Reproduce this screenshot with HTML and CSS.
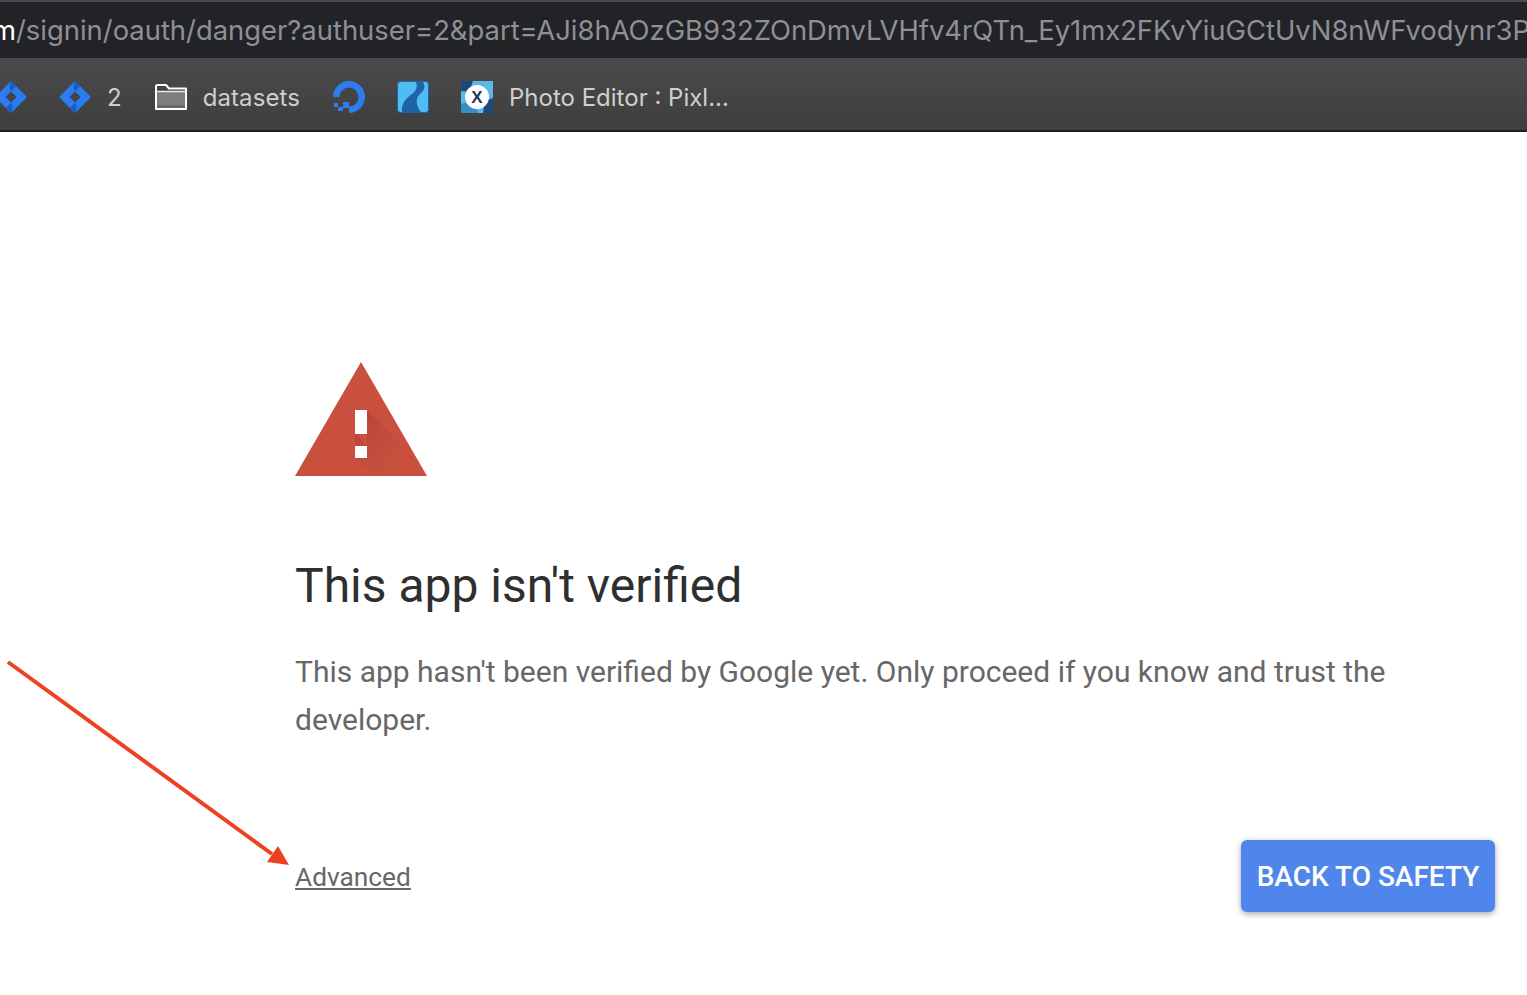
FILE: index.html
```html
<!DOCTYPE html>
<html lang="en">
<head>
  <meta charset="UTF-8">
  <title>This app isn't verified</title>
  <link rel="stylesheet" href="styles.css">
</head>
<body>

  <div class="url-bar">
    <div class="url-text"><span class="url-host">m</span>/signin/oauth/danger?authuser=2&amp;part=AJi8hAOzGB932ZOnDmvLVHfv4rQTn_Ey1mx2FKvYiuGCtUvN8nWFvodynr3P</div>
  </div>

  <div class="bookmarks">
    <div class="mark mark-cut">
      <svg class="icon" viewBox="0 0 32 32"><path fill="#2b7cf3" fill-rule="evenodd" d="M16 0 31 15Q32 16 31 17L16 32 1 17Q0 16 1 15ZM16 10.500 10.500 16 16 21.500 21.500 16Z"/><path fill="#1d5bc4" d="M16 0 21 5 16 10.500C14 7 14 3 16 0ZM16 32 11 27 16 21.500C18 25 18 29 16 32Z"/></svg>
    </div>
    <div class="mark mark-jira">
      <svg class="icon" viewBox="0 0 32 32"><path fill="#2b7cf3" fill-rule="evenodd" d="M16 0 31 15Q32 16 31 17L16 32 1 17Q0 16 1 15ZM16 10.500 10.500 16 16 21.500 21.500 16Z"/><path fill="#1d5bc4" d="M16 0 21 5 16 10.500C14 7 14 3 16 0ZM16 32 11 27 16 21.500C18 25 18 29 16 32Z"/></svg>
      <span>2</span>
    </div>
    <div class="mark mark-folder">
      <svg class="icon" viewBox="0 0 32 26"><path fill="#7d7d7d" d="M2 8H30V24H2Z"/><path fill="#666" d="M2 21.500H30V24H2Z"/><path fill="none" stroke="#fff" stroke-width="2" stroke-linejoin="round" d="M1 7V2.500Q1 1 2.500 1H11L14 4.500H31V25H1Z"/><path fill="none" stroke="#e8e8e8" stroke-width="1.500" d="M1 7.500H31"/></svg>
      <span>datasets</span>
    </div>
    <div class="mark mark-ocean">
      <svg class="icon" viewBox="0 0 32 32"><path fill="#2f7bf0" d="M16 32V25.500A9.500 9.500 0 1 0 6.500 16H0A16 16 0 1 1 16 32Z"/><path fill="#2f7bf0" d="M10 21H16V27H10ZM5 26H10V30H5ZM1 22H5V26H1Z"/></svg>
    </div>
    <div class="mark mark-river">
      <svg class="icon" viewBox="0 0 32 32"><rect x=".5" y=".5" width="31" height="31" rx="3" fill="#4fbdf4" stroke="#1f62a8"/><path fill="#1f62a8" d="M5 31C4 23 9 17 15 13C19 10 21 6 19 1L26 1C29 6 27 10 23 13C18 17 19 25 24 31Z"/></svg>
    </div>
    <div class="mark mark-pixlr">
      <svg class="icon" viewBox="0 0 32 32"><rect width="32" height="32" fill="#5cb8e8"/><path fill="#1c4a78" d="M0 0H12L8 11 0 10ZM22 32 24 20 32 17V32Z"/><path fill="#3a8cc8" d="M0 23 10 20 18 32H0Z"/><circle cx="16" cy="16" r="12" fill="#fff"/><text class="pixlr-x" x="16" y="22" text-anchor="middle">X</text></svg>
      <span>Photo Editor : Pixl...</span>
    </div>
  </div>

  <main class="page">
    <svg class="warning" viewBox="0 0 132 114">
      <defs>
        <linearGradient id="fold" x1="0" y1="0" x2="1" y2="1">
          <stop offset="0" stop-color="#a83e30" stop-opacity=".8"/>
          <stop offset="1" stop-color="#c8503f" stop-opacity="0"/>
        </linearGradient>
      </defs>
      <path fill="#c9503f" d="M66 0 132 114H0Z"/>
      <path fill="url(#fold)" d="M72 48 110 86 110 114H80L60 95 60 72 72 84Z"/>
      <path fill="#fff" d="M60 48H72V72H60ZM60 84H72V96H60Z"/>
    </svg>

    <h1>This app isn't verified</h1>
    <p>This app hasn't been verified by Google yet. Only proceed if you know and trust the developer.</p>

    <div class="actions">
      <a class="advanced" href="#">Advanced</a>
      <button class="btn-safety">BACK TO SAFETY</button>
    </div>
  </main>

  <svg class="arrow" viewBox="0 0 300 220">
    <path fill="none" stroke="#ee4023" stroke-width="4" d="M8 2 272 194"/>
    <path fill="#ee4023" d="M289 205 267 202 278 186Z"/>
  </svg>

</body>
</html>
```

FILE: styles.css
```css
body {
  margin: 0;
  height: 995px;
  overflow: hidden;
  background: #fff;
  font-family: Roboto, sans-serif;
  position: relative;
}

/* browser chrome */
.url-bar {
  height: 56px;
  border-top: 2px solid #4a4a4a;
  background: #222327;
  display: flex;
  align-items: center;
  overflow: hidden;
}
.url-text {
  margin-left: -8px;
  font-family: Inter, sans-serif;
  font-size: 27.400px;
  color: #8f9094;
  white-space: nowrap;
}
.url-host {
  color: #fff;
}
.bookmarks {
  height: 74px;
  box-sizing: border-box;
  padding-top: 6px;
  border-bottom: 2px solid #1e1e1e;
  background: linear-gradient(#4b4b4b, #3e3e3e);
  display: flex;
  align-items: center;
  overflow: hidden;
  color: #cfcfcf;
  font-family: Inter, sans-serif;
  font-size: 24px;
}
.mark {
  display: flex;
  align-items: center;
  flex-shrink: 0;
}
.icon {
  display: block;
  width: 32px;
  height: 32px;
}
.mark-cut {
  margin-left: -5px;
}
.mark-jira {
  margin-left: 32px;
  gap: 16px;
}
.mark-folder {
  margin-left: 33px;
  gap: 16px;
}
.mark-folder .icon {
  height: 26px;
}
.mark-folder span {
  letter-spacing: 0.1px;
}
.mark-ocean {
  margin-left: 33px;
}
.mark-river {
  margin-left: 32px;
}
.mark-pixlr {
  margin-left: 32px;
  gap: 16px;
}
.pixlr-x {
  font-family: "Liberation Sans", sans-serif;
  font-size: 17px;
  font-weight: bold;
  fill: #1c3a5c;
}

/* interstitial */
.page {
  padding: 230px 32px 0 295px;
}
.warning {
  display: block;
  width: 132px;
  height: 114px;
}
h1 {
  margin: 81px 0 0;
  font-size: 48px;
  font-weight: 400;
  line-height: 58px;
  color: #2f2f2f;
}
p {
  margin: 33px 0 0;
  max-width: 1120px;
  font-size: 30px;
  line-height: 48px;
  color: #676767;
}
.actions {
  margin-top: 96px;
  display: flex;
  justify-content: space-between;
  align-items: center;
}
.advanced {
  margin-top: 2px;
  font-size: 26.300px;
  color: #676767;
}
.btn-safety {
  width: 254px;
  height: 72px;
  border: none;
  border-radius: 6px;
  background: #5086ec;
  color: #fff;
  font-family: Roboto, sans-serif;
  font-size: 28px;
  font-weight: 500;
  box-shadow: 0 2px 6px rgba(0, 0, 0, 0.35);
}
.arrow {
  position: absolute;
  left: 0;
  top: 660px;
  width: 300px;
  height: 220px;
}
```
